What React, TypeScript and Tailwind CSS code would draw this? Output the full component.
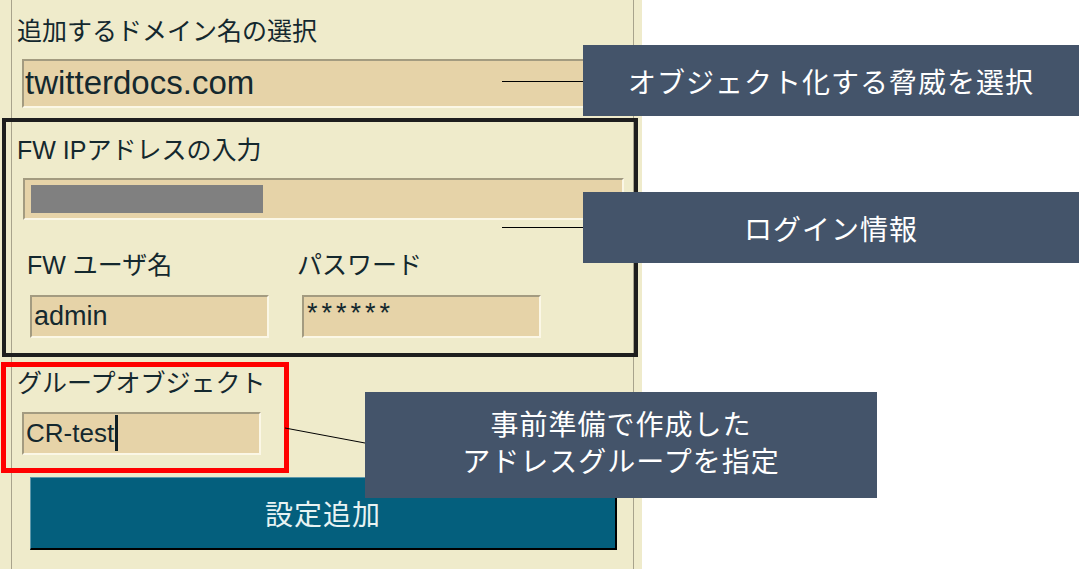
import React from 'react'

const font = { fontFamily: '"Liberation Sans", "Noto Sans CJK JP", sans-serif' }
const jp = { fontFamily: '"Noto Sans CJK JP", "Liberation Sans", sans-serif' }

function Field({ className, children }: { className?: string; children?: React.ReactNode }) {
  return (
    <div
      className={`relative bg-[#E6D3A8] border-t-2 border-l-2 border-b-2 border-r-2 border-t-[#A39B80] border-l-[#A39B80] border-b-[#FBF7E6] border-r-[#FBF7E6] ${className ?? ''}`}
    >
      {children}
    </div>
  )
}

function Callout({ className, children }: { className: string; children: React.ReactNode }) {
  return (
    <div
      className={`absolute flex items-center justify-center bg-[#44546A] text-white text-[28px] tracking-[1px] text-center ${className}`}
      style={jp}
    >
      {children}
    </div>
  )
}

export default function App() {
  return (
    <div className="relative w-[1079px] h-[569px] bg-white overflow-hidden text-[#14282e]" style={font}>
      {/* form panel */}
      <div className="w-[642px] h-[569px] bg-[#EFEBCB] pl-[11px] pr-[8px]">
        <div className="h-full border-l border-r border-[#A8A38C] flex flex-col">
          <div className="pt-[16px] pl-[5px] text-[25px] leading-[30px]">追加するドメイン名の選択</div>
          <Field className="mt-[13px] ml-[10px] w-[601px] h-[49px]">
            <div className="pl-[1px] text-[33px] leading-[44px]">twitterdocs.com</div>
          </Field>

          {/* login box */}
          <div className="mt-[10px] -ml-[10px] w-[636px] h-[239px] border-4 border-[#1e1e1e]">
            <div className="pt-[13px] pl-[11px] text-[25px] leading-[30px]">FW IPアドレスの入力</div>
            <Field className="mt-[13px] ml-[17px] w-[601px] h-[42px]">
              <div className="absolute left-[6px] top-[5px] w-[232px] h-[28px] bg-[#808080]" />
            </Field>
            <div className="mt-[30px] flex text-[25px] leading-[30px]">
              <div className="w-[291px] pl-[21px]">FW ユーザ名</div>
              <div>パスワード</div>
            </div>
            <div className="mt-[15px] flex">
              <Field className="ml-[24px] w-[239px] h-[43px]">
                <div className="pl-[2px] text-[27px] leading-[38px]">admin</div>
              </Field>
              <Field className="ml-[33px] w-[239px] h-[43px]">
                <div className="pl-[3px] pt-[4px] text-[27px] leading-[24px] tracking-[4px]">******</div>
              </Field>
            </div>
          </div>

          {/* group object box */}
          <div className="mt-[5px] -ml-[11px] w-[288px] h-[111px] border-[5px] border-[#FF0000]">
            <div className="pt-[1px] pl-[11px] text-[25px] leading-[30px]">グループオブジェクト</div>
            <Field className="mt-[14px] ml-[16px] w-[239px] h-[43px]">
              <div className="flex items-center pl-[2px] text-[26px] leading-[38px]">
                CR-test
                <span className="ml-[1px] inline-block w-[3px] h-[36px] bg-[#0f1f24]" />
              </div>
            </Field>
          </div>

          <button
            className="mt-[4px] ml-[18px] w-[587px] h-[73px] bg-[#045F7D] border-t border-l border-t-[#5E97AA] border-l-[#5E97AA] border-b-2 border-r-2 border-b-black border-r-black text-[#E8F3F3] text-[28px] tracking-[1px]"
            style={jp}
          >
            設定追加
          </button>
        </div>
      </div>

      {/* connector lines */}
      <svg className="absolute inset-0 pointer-events-none" width="1079" height="569">
        <line x1="502" y1="81.5" x2="583" y2="81.5" stroke="#000" strokeWidth="1" />
        <line x1="502" y1="227.5" x2="583" y2="227.5" stroke="#000" strokeWidth="1" />
        <line x1="285" y1="428" x2="365" y2="443" stroke="#000" strokeWidth="1" />
      </svg>

      <Callout className="left-[583px] top-[45px] w-[496px] h-[71px]">オブジェクト化する脅威を選択</Callout>
      <Callout className="left-[583px] top-[192px] w-[496px] h-[71px]">ログイン情報</Callout>
      <Callout className="left-[365px] top-[392px] w-[512px] h-[106px] leading-[37px] pb-[6px]">
        事前準備で作成した
        <br />
        アドレスグループを指定
      </Callout>
    </div>
  )
}
